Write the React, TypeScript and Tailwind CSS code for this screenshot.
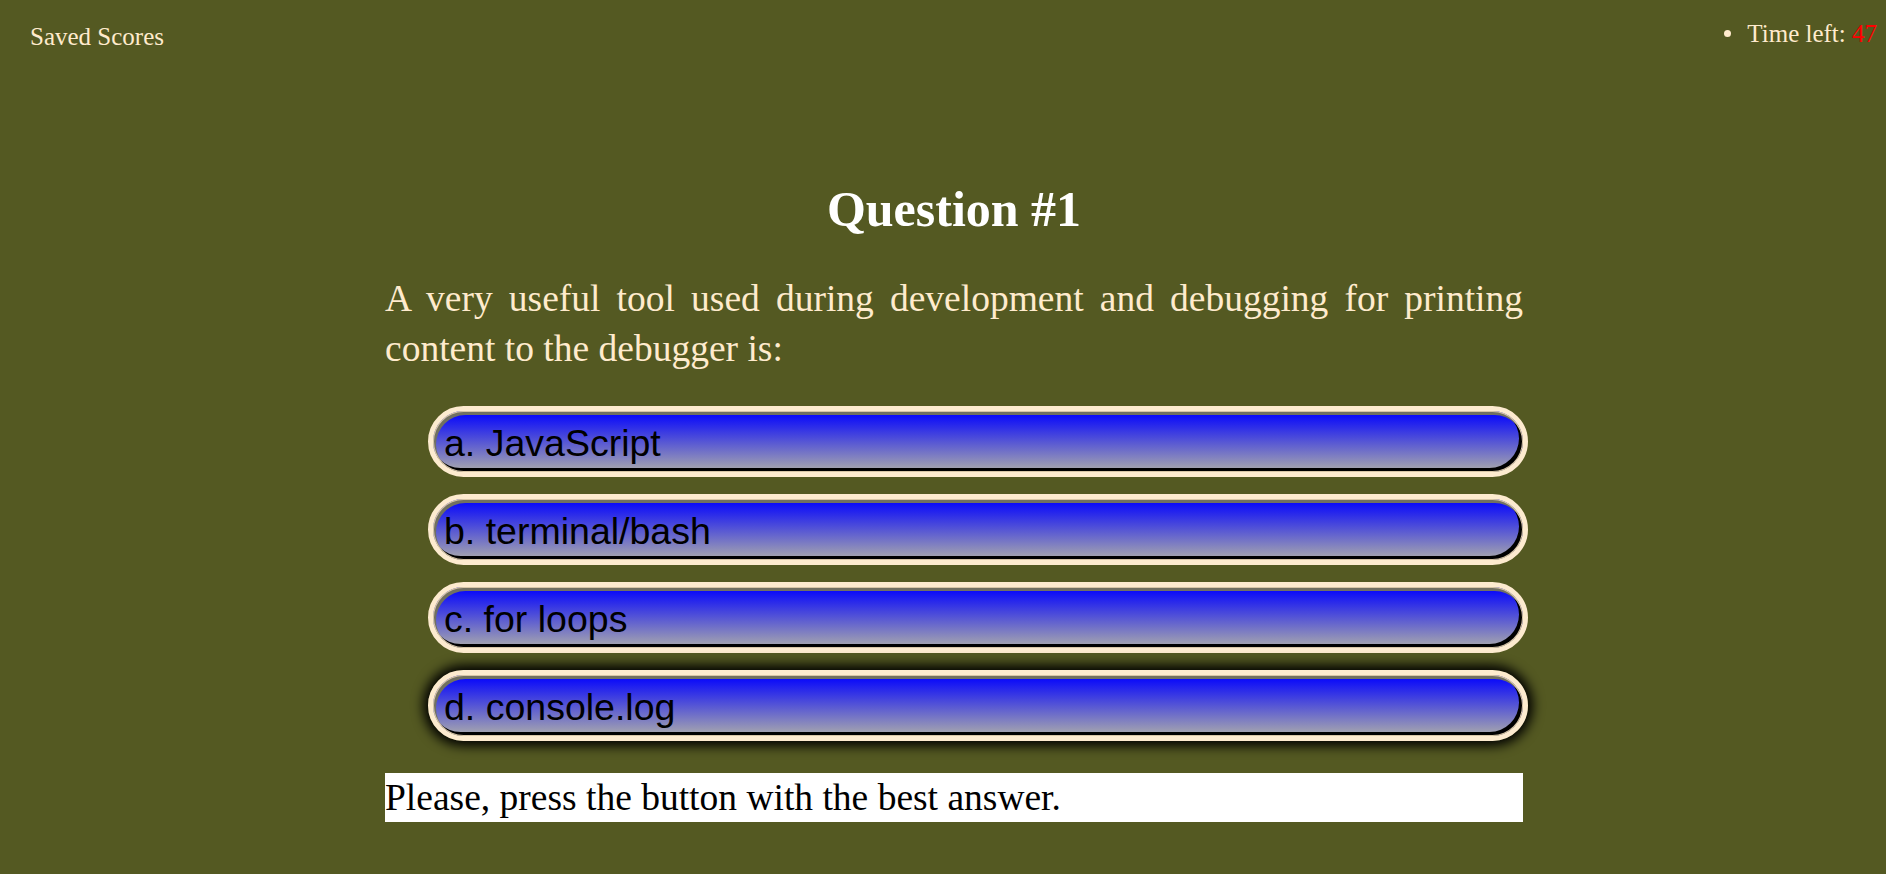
const answers: string[] = ["a. JavaScript", "b. terminal/bash", "c. for loops", "d. console.log"];

export default function App() {
  return (
    <div className="min-h-[874px] w-full bg-[#545922] font-['Liberation_Serif',serif] text-[#ffebcd]">
      <header className="flex items-start justify-between">
        <a className="ml-[30px] mt-[22px] text-[25px] leading-[29px]">Saved Scores</a>
        <ul className="mr-[9px] mt-[19px] text-[25px] leading-[29px]">
          <li className="flex items-center">
            <span className="mr-[16px] h-[7px] w-[7px] rounded-full bg-[#ffebcd]" />
            <span>
              Time left: <span className="text-[#ff0000]">47</span>
            </span>
          </li>
        </ul>
      </header>

      <main className="ml-[385px] w-[1138px] pt-[129px]">
        <h1 className="text-center text-[50px] font-bold leading-[58px] text-white">Question #1</h1>
        <p className="mt-[36px] text-justify text-[37.5px] leading-[50px]">
          A very useful tool used during development and debugging for printing content to the debugger is:
        </p>

        <ul className="ml-[43px] mt-[32px] flex w-[1100px] flex-col gap-[17px]">
          {answers.map((a, i) => (
            <li key={a}>
              <button
                className={
                  "flex h-[71px] w-full items-center rounded-full border-[5px] border-[#fdebcf] bg-[linear-gradient(#0000ff,#ababab)] pl-[11px] pt-[3px] text-left font-['Liberation_Sans',Arial,sans-serif] text-[37.5px] text-black " +
                  (i === 3
                    ? "shadow-[0_0_12px_5px_#000,inset_0_0_0_1px_#d8c6a6,inset_2px_3px_0_1px_#717062,inset_-3px_-3px_0_1px_#000]"
                    : "shadow-[inset_0_0_0_1px_#d8c6a6,inset_2px_3px_0_1px_#717062,inset_-3px_-3px_0_1px_#000]")
                }
              >
                {a}
              </button>
            </li>
          ))}
        </ul>

        <div className="mt-[32px] h-[49px] bg-white text-[37.5px] leading-[49px] text-black">
          Please, press the button with the best answer.
        </div>
      </main>
    </div>
  );
}
